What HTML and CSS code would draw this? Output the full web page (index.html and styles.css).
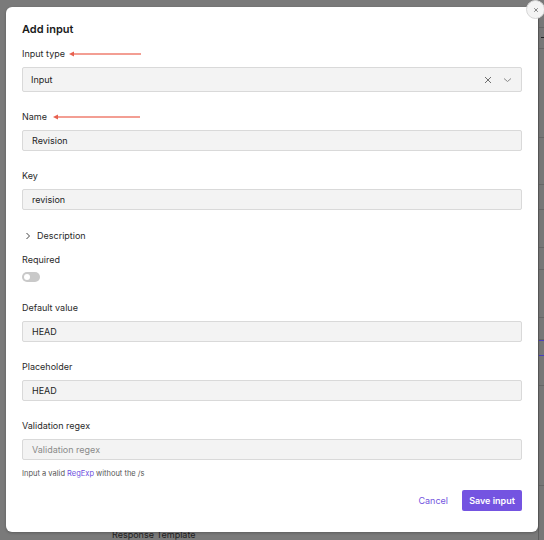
FILE: index.html
```html
<!DOCTYPE html>
<html>
<head>
<meta charset="utf-8">
<link rel="stylesheet" href="styles.css">
</head>
<body>
<div class="page">
  <div class="stage">
    <div class="modal">
      <button class="close" aria-label="Close">
        <svg width="6" height="6" viewBox="0 0 6 6"><path d="M1.2 1.2L4.8 4.8M4.8 1.2L1.2 4.8" stroke="#777" stroke-width="0.9"/></svg>
      </button>
      <h1 class="title">Add input</h1>

      <div class="field">
        <div class="label">Input type
          <svg class="arrow" width="72" height="6" viewBox="0 0 72 6"><path d="M4 3H72" stroke="#ef7e6f" stroke-width="1.3"/><path d="M0 3L5 0.5V5.5Z" fill="#e8604f"/></svg>
        </div>
        <div class="select">
          <span class="value">Input</span>
          <svg class="sel-icon" width="8" height="8" viewBox="0 0 8 8"><path d="M1 1L7 7M7 1L1 7" stroke="#6f6f6f" stroke-width="1"/></svg>
          <span class="sep"></span>
          <svg class="sel-icon" width="9" height="6" viewBox="0 0 9 6"><path d="M1 1.5L4.5 4.5L8 1.5" stroke="#8a8a8a" stroke-width="1" fill="none"/></svg>
        </div>
      </div>

      <div class="field">
        <div class="label">Name
          <svg class="arrow arrow-name" width="87" height="6" viewBox="0 0 87 6"><path d="M4 3H87" stroke="#ef7e6f" stroke-width="1.3"/><path d="M0 3L5 0.5V5.5Z" fill="#e8604f"/></svg>
        </div>
        <div class="input">Revision</div>
      </div>

      <div class="field">
        <div class="label">Key</div>
        <div class="input">revision</div>
      </div>

      <div class="disclosure">
        <svg width="6" height="8" viewBox="0 0 6 8"><path d="M1.5 1L4.5 4L1.5 7" stroke="#444" stroke-width="1" fill="none"/></svg>
        <span>Description</span>
      </div>

      <div class="field field-required">
        <div class="label">Required</div>
        <div class="toggle"><span class="knob"></span></div>
      </div>

      <div class="field">
        <div class="label">Default value</div>
        <div class="input">HEAD</div>
      </div>

      <div class="field">
        <div class="label">Placeholder</div>
        <div class="input">HEAD</div>
      </div>

      <div class="field field-last">
        <div class="label">Validation regex</div>
        <div class="input placeholder">Validation regex</div>
        <div class="help">Input a valid <span class="link">RegExp</span> without the /s</div>
      </div>

      <div class="actions">
        <button class="btn-cancel">Cancel</button>
        <button class="btn-save">Save input</button>
      </div>
    </div>
    <div class="behind">Response Template</div>
  </div>
  <div class="strip">
    <div class="row r1"></div>
    <div class="row r2"><span class="tick"></span></div>
    <div class="row r3"></div>
    <div class="row r4"></div>
    <div class="row r5"></div>
    <div class="row r6"></div>
    <div class="row r7"></div>
    <div class="row r8"></div>
    <div class="row r9"></div>
    <div class="row r10"></div>
    <div class="row r11"></div>
    <div class="row r12"></div>
  </div>
</div>
</body>
</html>
```

FILE: styles.css
```css
* { box-sizing: border-box; }
html, body { margin: 0; padding: 0; }
body {
  width: 544px;
  height: 540px;
  overflow: hidden;
  background: #7a7a7a;
  font-family: "Inter", "Noto Sans", sans-serif;
  color: #1d1d1d;
}
.page {
  display: flex;
  height: 540px;
}
.stage {
  width: 538px;
  padding: 7px 0 0 6px;
}
.modal {
  position: relative;
  z-index: 1;
  width: 532px;
  height: 525px;
  background: #fff;
  border-radius: 6px;
  padding: 14px 16px 0 16px;
  box-shadow: 0 1px 3px rgba(0,0,0,0.25);
  display: flex;
  flex-direction: column;
}
.close {
  position: absolute;
  right: -7px;
  top: -7px;
  width: 19px;
  height: 19px;
  border-radius: 50%;
  border: 1px solid #d6d6d6;
  background: #f3f3f3;
  padding: 0;
  display: flex;
  align-items: center;
  justify-content: center;
}
.title {
  margin: 0 0 8px 0;
  font-size: 11px;
  font-weight: 600;
  line-height: 16px;
  color: #1a1a1a;
}
.field {
  display: flex;
  flex-direction: column;
  margin-bottom: 16px;
}
.label {
  font-size: 9px;
  line-height: 16px;
  color: #2a2a2a;
  padding-top: 1px;
  margin-bottom: 5px;
  display: flex;
  align-items: center;
}
.arrow { margin-left: 4px; }
.arrow-name { margin-left: 6px; }
.select {
  height: 25px;
  background: #f3f3f3;
  border: 1px solid #d9d9d9;
  border-radius: 2px;
  display: flex;
  align-items: center;
  padding: 0 9px 0 8px;
  font-size: 9px;
}
.select .value { flex: 1; }
.sep { width: 11px; }
.input {
  height: 21px;
  background: #f3f3f3;
  border: 1px solid #d9d9d9;
  border-radius: 2px;
  display: flex;
  align-items: center;
  padding: 0 9px;
  font-size: 9px;
  color: #1d1d1d;
}
.input.placeholder { color: #8a8a8a; }
.disclosure {
  display: flex;
  align-items: center;
  gap: 6px;
  font-size: 9px;
  line-height: 16px;
  margin: 2px 0 7px 3px;
  color: #2a2a2a;
}
.field-required { margin-bottom: 17px; }
.field-required .label { margin-bottom: 4px; }
.field-last { margin-bottom: 0; }
.toggle {
  width: 18px;
  height: 10px;
  border-radius: 5px;
  background: #c9c9c9;
  padding: 2px;
  display: flex;
}
.knob {
  width: 6px;
  height: 6px;
  border-radius: 50%;
  background: #fff;
}
.help {
  margin-top: 8px;
  font-size: 7.5px;
  line-height: 12px;
  color: #555;
}
.link { color: #6c4fe0; }
.actions {
  margin-top: 10px;
  display: flex;
  justify-content: flex-end;
  align-items: center;
  gap: 14px;
}
.btn-cancel {
  background: none;
  border: none;
  padding: 0;
  font-family: inherit;
  font-size: 9px;
  color: #7455e0;
}
.btn-save {
  width: 60px;
  height: 21px;
  background: #7454e1;
  color: #fff;
  border: none;
  border-radius: 2px;
  font-family: inherit;
  font-size: 9px;
  font-weight: 600;
  padding: 0;
}
.behind {
  margin: -3px 0 0 106px;
  font-size: 9px;
  line-height: 12px;
  color: #1e1e1e;
}
.strip {
  width: 6px;
  border-left: 1px solid #5e5e5e;
  background: #777;
  display: flex;
  flex-direction: column;
}
.row { border-bottom: 1px solid #666; }
.r1 { height: 28px; }
.r2 { height: 21px; position: relative; }
.tick { display: block; width: 3px; height: 1px; background: #222; margin: 9px 0 0 2px; }
.r3 { height: 89px; }
.r4 { height: 47px; }
.r5 { height: 25px; }
.r6 { height: 38px; }
.r7 { height: 22px; }
.r8 { height: 48px; }
.r9 { height: 22px; }
.r10 { height: 16px; border-top: 1px solid #4b3fc0; border-bottom: 1px solid #4b3fc0; }
.r11 { height: 30px; }
.r12 { height: 100px; }
```
